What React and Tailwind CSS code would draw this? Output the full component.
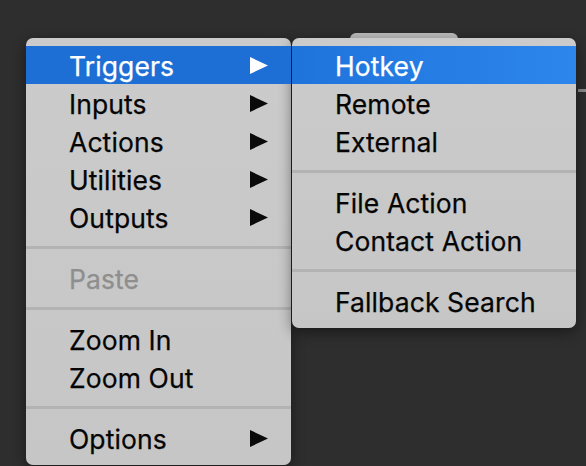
const mainItems = [
  { label: 'Triggers', sub: true, active: true },
  { label: 'Inputs', sub: true },
  { label: 'Actions', sub: true },
  { label: 'Utilities', sub: true },
  { label: 'Outputs', sub: true },
  'sep',
  { label: 'Paste', disabled: true },
  'sep',
  { label: 'Zoom In' },
  { label: 'Zoom Out' },
  'sep',
  { label: 'Options', sub: true },
]

const triggerItems = [
  { label: 'Hotkey', active: true },
  { label: 'Remote' },
  { label: 'External' },
  'sep',
  { label: 'File Action' },
  { label: 'Contact Action' },
  'sep',
  { label: 'Fallback Search' },
]

function Arrow({ active }) {
  return (
    <svg width="18" height="17" viewBox="0 0 18 17" className="absolute left-[224px] top-[11px]">
      <polygon points="0,0 18,8.5 0,17" fill={active ? '#ffffff' : '#0a0a0a'} />
    </svg>
  )
}

function Menu({ items, width, active }) {
  return (
    <div
      className={`${width} flex flex-col rounded-[7px] bg-[linear-gradient(180deg,#cbcbcb,#c6c6c6)] py-[8px] shadow-[0_4px_14px_rgba(0,0,0,0.45)]`}
    >
      {items.map((item, i) =>
        item === 'sep' ? (
          <div key={i} className="flex h-[23px] items-center">
            <div className="h-[3px] w-full bg-[#b3b3b3]" />
          </div>
        ) : (
          <div
            key={i}
            className={`relative flex h-[38px] items-center pl-[43px] text-[26.5px] leading-none tracking-[0.1px] ${
              item.active
                ? `${active} text-white`
                : item.disabled
                  ? 'text-[#8e8e8e]'
                  : 'text-[#050505]'
            }`}
          >
            <span className="pt-[2px] [-webkit-text-stroke:0.25px_currentColor]">{item.label}</span>
            {item.sub && <Arrow active={item.active} />}
          </div>
        )
      )}
    </div>
  )
}

export default function App() {
  return (
    <div className="relative h-[466px] w-[586px] overflow-hidden bg-[#2e2e2e] font-['Inter','Noto_Sans',sans-serif]">
      {/* bits of the window behind the menus */}
      <div className="absolute left-[350px] top-[33px] h-[12px] w-[108px] rounded-t-[6px] bg-[#bdbdbd]" />
      <div className="absolute left-[578px] top-[89px] h-[3px] w-[8px] bg-[#8a8a8a]" />

      <div className="relative flex items-start pl-[26px] pt-[38px]">
        <Menu items={mainItems} width="w-[265px]" active="bg-[#1d6fd6]" />
        <Menu
          items={triggerItems}
          width="ml-[1px] w-[284px]"
          active="bg-[linear-gradient(90deg,#1f74dc,#2c86ec)]"
        />
      </div>
    </div>
  )
}
